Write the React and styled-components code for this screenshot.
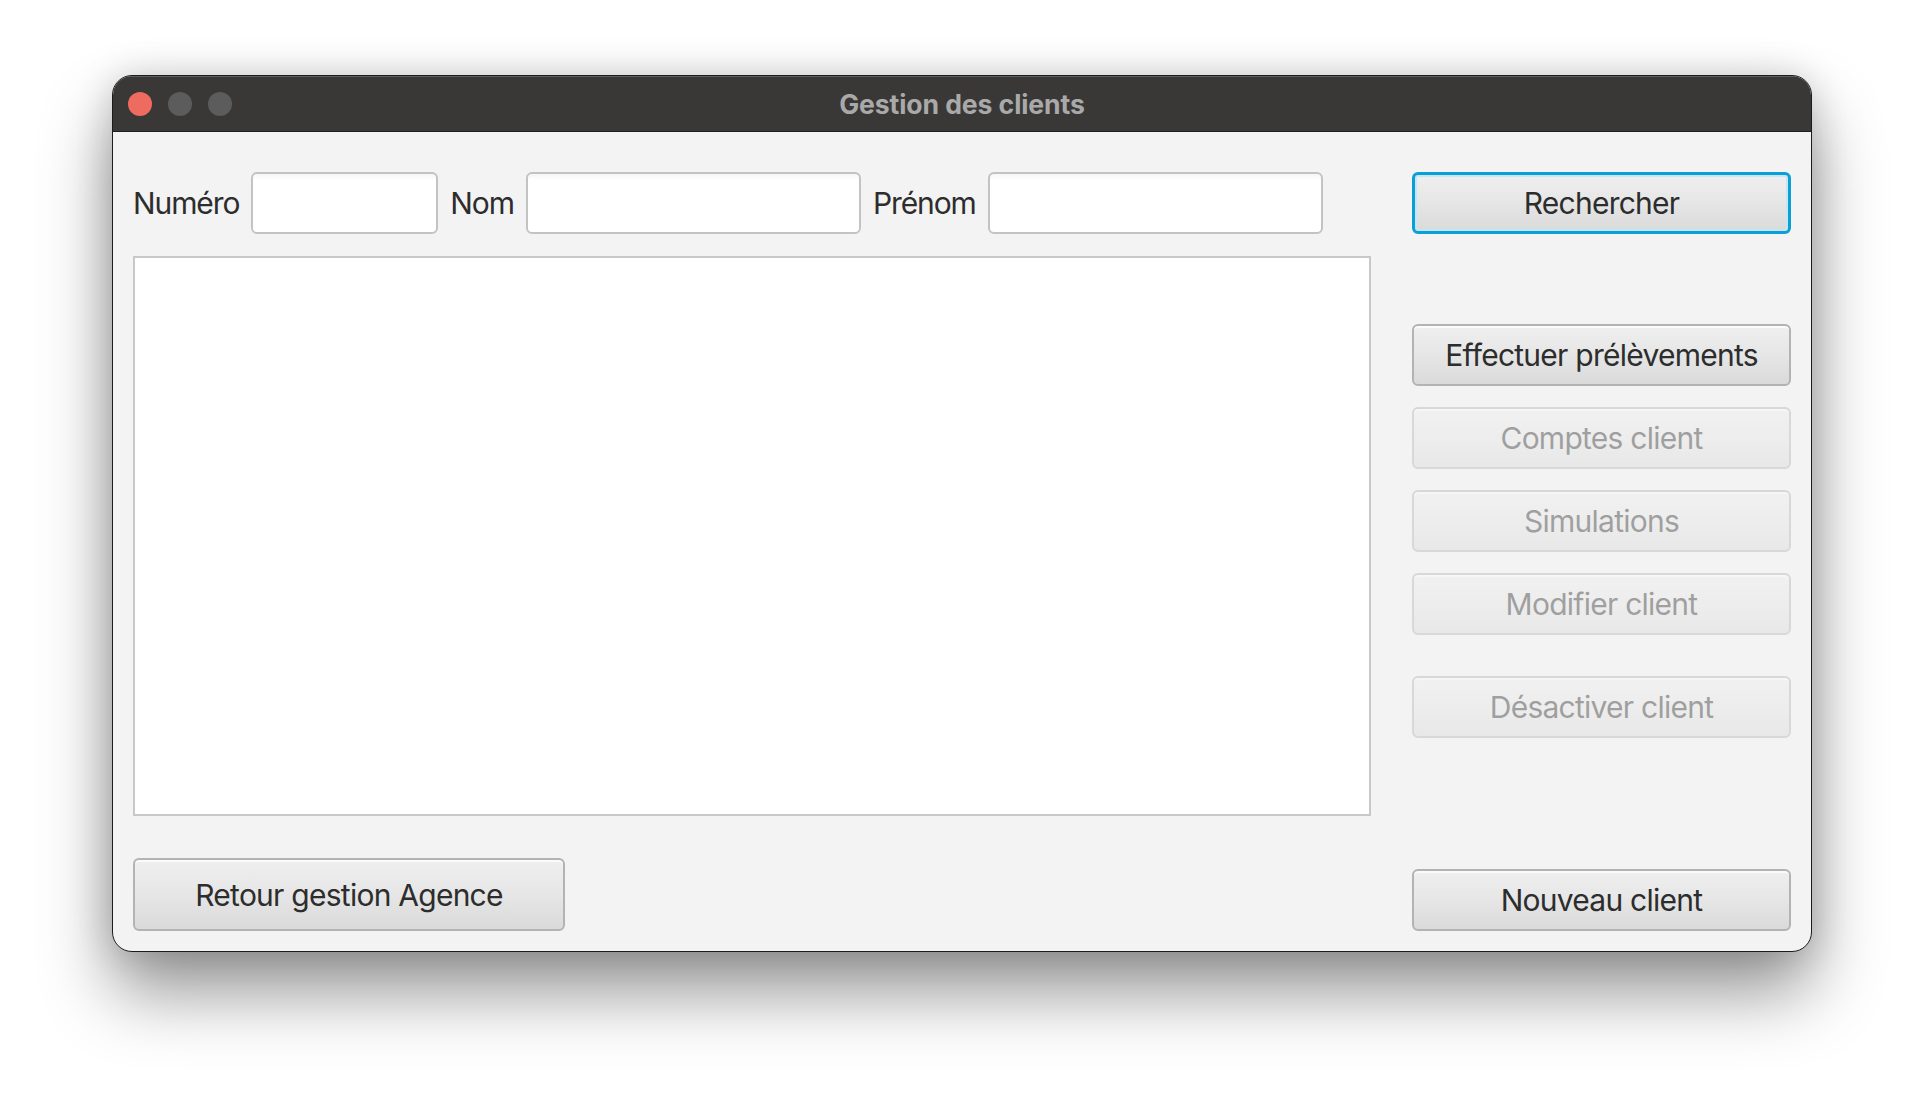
import React from "react";
import styled, { createGlobalStyle, css } from "styled-components";

const GlobalStyle = createGlobalStyle`
  html, body {
    margin: 0;
    padding: 0;
    background: #ffffff;
  }
  body {
    font-family: Inter, "Noto Sans", "Liberation Sans", sans-serif;
    -webkit-font-smoothing: antialiased;
  }
  * { box-sizing: border-box; }
`;

const Desktop = styled.div`
  width: 1924px;
  height: 1100px;
  padding: 75px 0 0 112px;
  overflow: hidden;
  background: #ffffff;
`;

const Window = styled.div`
  width: 1700px;
  height: 877px;
  border-radius: 20px;
  border: 1px solid #1c1c1c;
  background: #f3f3f3;
  overflow: hidden;
  display: flex;
  flex-direction: column;
  box-shadow:
    0 40px 70px rgba(0, 0, 0, 0.42),
    0 0 36px rgba(0, 0, 0, 0.16);
`;

const TitleBar = styled.div`
  height: 56px;
  flex: none;
  display: grid;
  grid-template-columns: 1fr auto 1fr;
  align-items: center;
  background: #393837;
  border-bottom: 1px solid #1e1e1e;
  box-shadow: inset 0 1px 0 #5e5e5e;
  padding: 0 15px;
`;

const Lights = styled.div`
  display: flex;
  gap: 16px;
  align-items: center;
`;

const Light = styled.span`
  width: 24px;
  height: 24px;
  border-radius: 50%;
  background: ${(p) => p.$color};
`;

const Title = styled.div`
  font-weight: 700;
  font-size: 26.6px;
  color: #a9a9a9;
  letter-spacing: -0.1px;
`;

const Content = styled.div`
  flex: 1;
  display: grid;
  grid-template-columns: 1fr 379px;
  column-gap: 41px;
  padding: 40px 20px 20px 20px;
`;

const LeftColumn = styled.div`
  display: flex;
  flex-direction: column;
  min-width: 0;
`;

const RightColumn = styled.div`
  display: flex;
  flex-direction: column;
`;

const SearchRow = styled.div`
  display: flex;
  align-items: center;
  gap: 12px;
  height: 62px;
`;

const Label = styled.label`
  font-size: 30px;
  color: #2d2d2d;
  letter-spacing: -1.1px;
  white-space: nowrap;
`;

const TextField = styled.div`
  width: ${(p) => p.$w}px;
  height: 62px;
  flex: none;
  border: 2px solid #c3c3c3;
  border-radius: 6px;
  background: linear-gradient(to bottom, #f6f6f6 0px, #ffffff 6px, #ffffff 100%);
`;

const ListBox = styled.div`
  margin-top: 22px;
  height: 560px;
  background: #ffffff;
  border: 2px solid #c8c8c8;
`;

const Footer = styled.div`
  margin-top: auto;
  display: flex;
`;

const Button = styled.button`
  font-family: inherit;
  font-size: 30px;
  letter-spacing: -0.75px;
  color: #2d2d2d;
  width: ${(p) => (p.$w ? `${p.$w}px` : "100%")};
  height: ${(p) => p.$h || 62}px;
  margin-top: ${(p) => p.$mt || 0}px;
  flex: none;
  padding: 0;
  border-radius: 6px;
  border: 2px solid #b3b3b3;
  background: linear-gradient(to bottom, #efefef 0%, #e6e6e6 50%, #dadada 100%);
  box-shadow: inset 0 2px 0 rgba(255, 255, 255, 0.75);
  display: flex;
  align-items: center;
  justify-content: center;
  cursor: default;

  ${(p) =>
    p.$focused &&
    css`
      border: 3px solid #0aa0d6;
      box-shadow: inset 0 0 0 2px #c6e6f3;
    `}

  ${(p) =>
    p.$bottom &&
    css`
      margin-top: auto;
    `}

  &:disabled {
    opacity: 0.42;
    color: #2d2d2d;
  }
`;

export default function App() {
  return (
    <>
      <GlobalStyle />
      <Desktop>
        <Window>
          <TitleBar>
            <Lights>
              <Light $color="#ee6b5f" />
              <Light $color="#5c5c5c" />
              <Light $color="#5c5c5c" />
            </Lights>
            <Title>Gestion des clients</Title>
            <span />
          </TitleBar>
          <Content>
            <LeftColumn>
              <SearchRow>
                <Label>Numéro</Label>
                <TextField $w={187} />
                <Label>Nom</Label>
                <TextField $w={335} />
                <Label>Prénom</Label>
                <TextField $w={335} />
              </SearchRow>
              <ListBox />
              <Footer>
                <Button $w={432} $h={73}>Retour gestion Agence</Button>
              </Footer>
            </LeftColumn>
            <RightColumn>
              <Button $focused>Rechercher</Button>
              <Button $mt={90}>Effectuer prélèvements</Button>
              <Button $mt={21} disabled>Comptes client</Button>
              <Button $mt={21} disabled>Simulations</Button>
              <Button $mt={21} disabled>Modifier client</Button>
              <Button $mt={41} disabled>Désactiver client</Button>
              <Button $bottom>Nouveau client</Button>
            </RightColumn>
          </Content>
        </Window>
      </Desktop>
    </>
  );
}
